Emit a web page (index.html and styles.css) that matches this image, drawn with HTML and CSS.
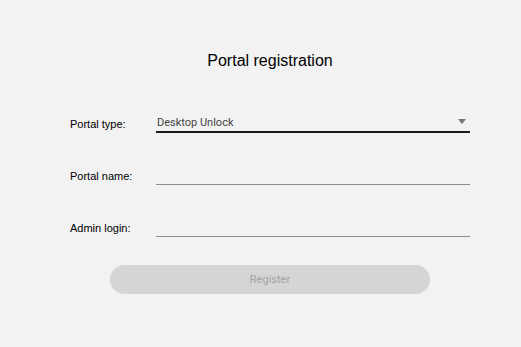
FILE: index.html
```html
<!DOCTYPE html>
<html lang="en">
<head>
    <meta charset="UTF-8">
    <meta name="viewport" content="width=device-width, initial-scale=1.0">
    <title>Portal registration</title>
    <link rel="stylesheet" href="styles.css">
</head>
<body>
    <div class="container">
        <h1>Portal registration</h1>
        <div class="form-row">
            <label>Portal type:</label>
            <div class="field select">
                <span class="select-value">Desktop Unlock</span>
                <span class="arrow"></span>
            </div>
        </div>
        <div class="form-row">
            <label for="name">Portal name:</label>
            <input class="field" type="text" id="name">
        </div>
        <div class="form-row">
            <label for="login">Admin login:</label>
            <input class="field" type="text" id="login">
        </div>
        <button class="register" disabled>Register</button>
    </div>
</body>
</html>
```

FILE: styles.css
```css
body {
    font-family: "Liberation Sans", Arial, sans-serif;
    background-color: #f2f2f2;
    color: #000;
    margin: 0;
    padding: 0;
}
.container {
    width: 400px;
    margin-left: 70px;
    padding-top: 52px;
}
h1 {
    font-size: 16px;
    line-height: 18px;
    font-weight: normal;
    text-align: center;
    margin: 0 0 33px 0;
}
.form-row {
    display: flex;
    align-items: flex-end;
    height: 30px;
    margin-bottom: 22px;
}
.form-row label {
    width: 86px;
    font-size: 11px;
    line-height: 13px;
    padding-bottom: 2px;
}
.field {
    flex: 1;
    height: 100%;
    box-sizing: border-box;
    background: transparent;
    border: none;
    border-bottom: 1px solid #8c8c8c;
    padding: 0;
    margin: 0;
    font-family: Roboto, sans-serif;
    font-size: 11px;
    outline: none;
}
.select {
    display: flex;
    align-items: flex-end;
    justify-content: space-between;
    border-bottom: 2px solid #1a1a1a;
    padding: 0 4px 2px 1px;
    color: #444;
}
.select-value {
    line-height: 13px;
}
.arrow {
    width: 0;
    height: 0;
    border-left: 4px solid transparent;
    border-right: 4px solid transparent;
    border-top: 5px solid #757575;
    margin-bottom: 5px;
}
.register {
    display: block;
    width: 320px;
    height: 29px;
    margin: 28px auto 0;
    border: none;
    border-radius: 15px;
    background-color: #d5d5d5;
    color: #a3a3a3;
    font-family: Roboto, sans-serif;
    font-size: 11px;
}
```
